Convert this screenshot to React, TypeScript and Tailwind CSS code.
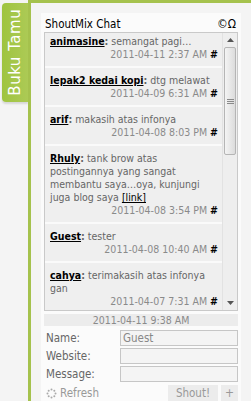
import React from "react";

type Msg = { name: string; lines: React.ReactNode; time: string };

const messages: Msg[] = [
  { name: "animasine", lines: "semangat pagi…", time: "2011-04-11 2:37 AM" },
  { name: "lepak2 kedai kopi", lines: "dtg melawat", time: "2011-04-09 6:31 AM" },
  { name: "arif", lines: "makasih atas infonya", time: "2011-04-08 8:03 PM" },
  {
    name: "Rhuly",
    lines: (
      <>
        tank brow atas postingannya yang sangat membantu saya…oya, kunjungi juga blog saya{" "}
        <span className="text-black underline">[link]</span>
      </>
    ),
    time: "2011-04-08 3:54 PM",
  },
  { name: "Guest", lines: "tester", time: "2011-04-08 10:40 AM" },
  { name: "cahya", lines: "terimakasih atas infonya gan", time: "2011-04-07 7:31 AM" },
];

const font = { fontFamily: '"DejaVu Sans Condensed", "DejaVu Sans", Verdana, sans-serif' };

function Scrollbar() {
  return (
    <div className="w-[15px] shrink-0 bg-[#eeeeee] flex flex-col border-l border-[#e2e2e2]">
      <div className="h-[14px] flex items-center justify-center">
        <svg width="7" height="4" viewBox="0 0 7 4">
          <path d="M0 4 L3.5 0 L7 4 Z" fill="#555" />
        </svg>
      </div>
      <div className="mx-[1px] h-[108px] rounded-[2px] border border-[#b5b5b5] bg-gradient-to-r from-[#f4f4f4] to-[#dcdcdc] flex flex-col items-center justify-center gap-[1px]">
        <div className="h-px w-[7px] bg-[#8a8a8a]" />
        <div className="h-px w-[7px] bg-[#8a8a8a]" />
        <div className="h-px w-[7px] bg-[#8a8a8a]" />
      </div>
      <div className="flex-1" />
      <div className="h-[14px] flex items-center justify-center">
        <svg width="7" height="4" viewBox="0 0 7 4">
          <path d="M0 0 L3.5 4 L7 0 Z" fill="#555" />
        </svg>
      </div>
    </div>
  );
}

export default function App() {
  return (
    <div className="w-[251px] h-[401px] bg-[#f4f4f4] flex overflow-hidden text-[10.5px]" style={font}>
      {/* Tab "Buku Tamu" */}
      <div className="w-[28px] shrink-0 pt-[3px] pl-[2px]">
        <div className="h-[99px] w-[26px] rounded-l-[4px] bg-gradient-to-r from-[#9fc43f] to-[#acca55] flex items-center justify-center shadow-[0_2px_2px_rgba(0,0,0,0.12)]">
          <span
            className="-rotate-90 whitespace-nowrap text-white text-[15px] tracking-[0.5px]"
            style={{ fontFamily: '"DejaVu Sans", sans-serif' }}
          >
            Buku Tamu
          </span>
        </div>
      </div>

      {/* Panel */}
      <div className="flex-1 border-t-[3px] border-l-[3px] border-[#a5c24d] flex">
        <div className="ml-[10px] mt-[10px] w-[200px] bg-[#fbfbfb] flex flex-col px-[3px]">
          <div className="shrink-0 h-[19px] flex items-end justify-between pb-[2px] pl-[1px] pr-[2px]">
            <span className="text-[11.5px] text-black leading-none">ShoutMix Chat</span>
            <span className="text-[12px] text-black leading-none">©Ω</span>
          </div>

          {/* Chat box */}
          <div className="shrink-0 h-[279px] border border-[#c9c9c9] flex overflow-hidden">
            <div className="flex-1 flex flex-col gap-[2px] bg-[#fafafa] -mt-[4px]">
              {messages.map((m) => (
                <div key={m.time} className="shrink-0 bg-[#efefef] pl-[5px] pr-[4px] pt-[6px] pb-[5px] leading-[13px] text-[#666]">
                  <div>
                    <span className="font-bold text-black underline">{m.name}</span>
                    <span className="font-bold text-[#666]">:</span> {m.lines}
                  </div>
                  <div className="text-right text-[#8a8a8a]">
                    {m.time} <span className="font-bold text-black">#</span>
                  </div>
                </div>
              ))}
            </div>
            <Scrollbar />
          </div>

          {/* Last update */}
          <div className="shrink-0 mt-[3px] h-[12px] bg-[#ececec] text-center text-[#8a8a8a] leading-[12px]">
            2011-04-11 9:38 AM
          </div>

          {/* Form */}
          <div className="shrink-0 mt-[4px] flex flex-col gap-[2px] text-[#666]">
            {[
              { label: "Name:", val: "Guest" },
              { label: "Website:", val: "" },
              { label: "Message:", val: "" },
            ].map((f) => (
              <div key={f.label} className="flex items-center h-[16px]">
                <span className="w-[76px] pl-[2px] text-[11.5px] leading-[16px]">{f.label}</span>
                <div className="h-[16px] flex-1 border border-[#c6c6c6] bg-[#f4f4f4] pl-[2px] leading-[14px] text-[#888] text-[11.5px]">
                  {f.val}
                </div>
              </div>
            ))}
          </div>

          <div className="shrink-0 mt-[3px] h-[16px] flex items-center text-[#999]">
            <svg width="11" height="11" viewBox="0 0 11 11" className="ml-[2px]">
              {[0, 45, 90, 135, 180, 225, 270, 315].map((a) => (
                <circle
                  key={a}
                  cx={5.5 + 4 * Math.cos((a * Math.PI) / 180)}
                  cy={5.5 + 4 * Math.sin((a * Math.PI) / 180)}
                  r="1"
                  fill="#aaa"
                />
              ))}
            </svg>
            <span className="ml-[3px] text-[11.5px] leading-[16px]">Refresh</span>
            <div className="ml-auto h-[16px] w-[50px] bg-[#ececec] text-center text-[11.5px] leading-[16px] text-[#999]">
              Shout!
            </div>
            <div className="ml-[3px] h-[16px] w-[17px] bg-[#ececec] text-center text-[12px] leading-[16px] text-[#999]">
              +
            </div>
          </div>
        </div>
      </div>
    </div>
  );
}
